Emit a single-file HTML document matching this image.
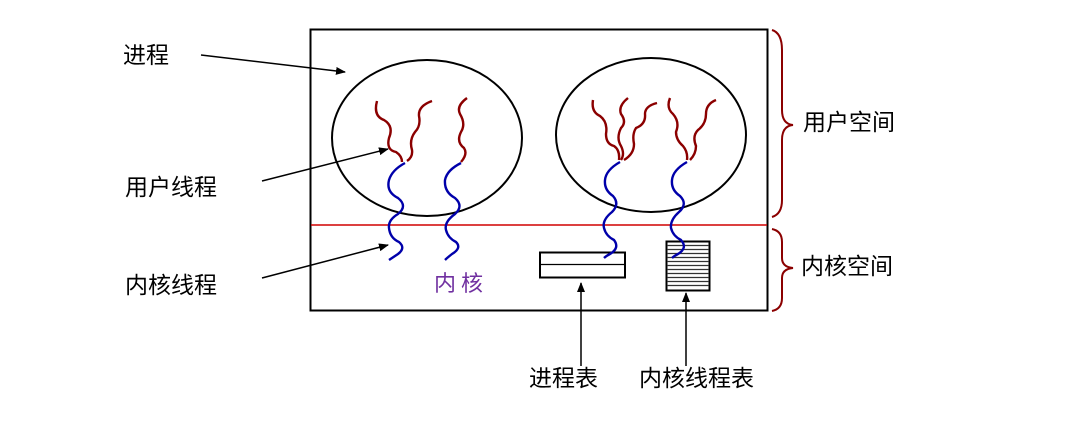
<!DOCTYPE html>
<html><head><meta charset="utf-8"><style>
html,body{margin:0;padding:0;background:#fff;}
svg{display:block;}
text{font-family:"Liberation Sans","Noto Sans CJK SC",sans-serif;font-size:23px;fill:#000;}
</style></head><body>
<svg width="1066" height="429" viewBox="0 0 1066 429" xmlns="http://www.w3.org/2000/svg">
<defs>
<marker id="ah" markerWidth="10" markerHeight="8" refX="9" refY="4" orient="auto" markerUnits="userSpaceOnUse">
<path d="M0,0 L10,4 L0,8 z" fill="#000"/>
</marker>
</defs>
<rect x="310.5" y="29.5" width="457" height="281" fill="none" stroke="#000" stroke-width="2"/>
<line x1="311" y1="225" x2="767" y2="225" stroke="#d00000" stroke-width="1.5"/>
<ellipse cx="427" cy="138" rx="95" ry="78" fill="none" stroke="#000" stroke-width="2"/>
<ellipse cx="651" cy="135" rx="95" ry="77" fill="none" stroke="#000" stroke-width="2"/>

<rect x="540" y="252.5" width="85" height="25" fill="#fff" stroke="#000" stroke-width="2"/>
<line x1="540" y1="264.5" x2="625" y2="264.5" stroke="#000" stroke-width="1.3"/>
<rect x="666.5" y="241.5" width="43" height="49" fill="#fff" stroke="#000" stroke-width="2"/>
<g stroke="#333" stroke-width="1.2">
<line x1="667" y1="245.5" x2="709" y2="245.5"/><line x1="667" y1="249.5" x2="709" y2="249.5"/>
<line x1="667" y1="253.5" x2="709" y2="253.5"/><line x1="667" y1="257.5" x2="709" y2="257.5"/>
<line x1="667" y1="261.5" x2="709" y2="261.5"/><line x1="667" y1="265.5" x2="709" y2="265.5"/>
<line x1="667" y1="269.5" x2="709" y2="269.5"/><line x1="667" y1="273.5" x2="709" y2="273.5"/>
<line x1="667" y1="277.5" x2="709" y2="277.5"/><line x1="667" y1="281.5" x2="709" y2="281.5"/>
<line x1="667" y1="285.5" x2="709" y2="285.5"/>
</g>

<g fill="none" stroke="#8b0000" stroke-width="2.4">
<path d="M377,101 Q373,116 384,120 Q394,126 389,138 Q386,150 396,152 Q402,156 402,162"/>
<path d="M432,101 Q418,106 419,116 Q421,126 415,132 Q409,140 412,150 Q413,157 407,161"/>
<path d="M467,98 Q456,106 460,114 Q466,124 461,132 Q456,142 464,148 Q468,154 461,162"/>
<path d="M593,100 Q591,112 600,116 Q608,122 606,134 Q606,144 614,146 Q620,150 619,160"/>
<path d="M628,98 Q618,106 621,114 Q627,122 621,128 Q616,138 621,146 Q625,154 621,160"/>
<path d="M657,103 Q645,106 645,114 Q646,124 636,128 Q632,134 634,144 Q634,154 624,160"/>
<path d="M670,98 Q666,108 673,114 Q680,122 676,132 Q676,140 683,146 Q688,152 687,160"/>
<path d="M716,100 Q706,104 706,114 Q706,124 698,130 Q692,136 696,146 Q696,154 690,160"/>
</g>
<g fill="none" stroke="#0000aa" stroke-width="2.4">
<path d="M405,163 Q392,170 389,180 Q386,192 398,198 Q408,206 398,214 Q388,220 389,228 Q390,238 399,242 Q406,248 398,254 Q392,258 389,260"/>
<path d="M461,163 Q447,170 445,180 Q444,192 455,198 Q464,206 455,214 Q444,222 446,230 Q448,238 456,242 Q462,248 452,254 Q447,258 445,260"/>
<path d="M620,162 Q606,170 605,180 Q604,190 613,196 Q620,204 612,212 Q602,220 604,228 Q606,236 614,240 Q620,248 610,254 Q606,256 604,258"/>
<path d="M687,162 Q673,170 672,180 Q671,190 680,196 Q688,204 679,212 Q670,220 671,228 Q673,236 681,240 Q688,248 678,254 Q674,256 672,258"/>
</g>

<g stroke="#000" stroke-width="1.5" fill="none">
<line x1="201" y1="55" x2="345" y2="72" marker-end="url(#ah)"/>
<line x1="262" y1="181" x2="388" y2="149" marker-end="url(#ah)"/>
<line x1="262" y1="278" x2="388" y2="245" marker-end="url(#ah)"/>
<line x1="581" y1="366" x2="581" y2="283" marker-end="url(#ah)"/>
<line x1="686" y1="366" x2="686" y2="293" marker-end="url(#ah)"/>
</g>

<g fill="none" stroke="#8b0000" stroke-width="2">
<path d="M772,30 Q782,33 782,50 L782,110 Q782,124 793,125 Q782,126 782,140 L782,200 Q782,214 772,217"/>
<path d="M772,229 Q782,231 782,242 L782,258 Q782,267 793,268 Q782,269 782,278 L782,298 Q782,309 772,311"/>
</g>

<text x="123" y="63">进程</text>
<text x="125" y="195">用户线程</text>
<text x="125" y="293">内核线程</text>
<text x="803" y="130">用户空间</text>
<text x="801" y="274">内核空间</text>
<text x="434" y="291" style="fill:#7030a0;font-size:22px;letter-spacing:5px">内核</text>
<text x="529" y="386">进程表</text>
<text x="639" y="386">内核线程表</text>
</svg>
</body></html>
